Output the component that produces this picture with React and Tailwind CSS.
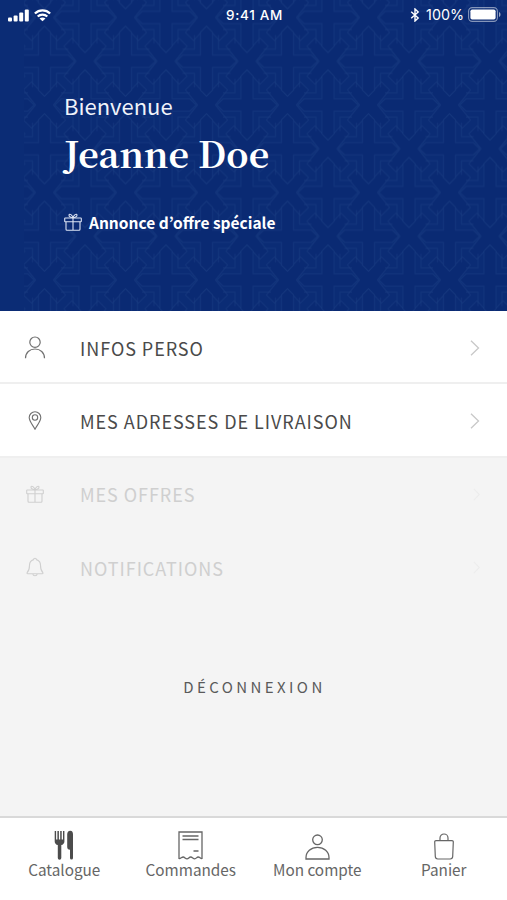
import React from "react";

const SANS = "font-['Noto_Sans_CJK_KR','Noto_Sans',sans-serif]";

function Svg({ children, className = "", ...props }) {
  return (
    <svg fill="none" stroke="currentColor" strokeWidth="1.1" className={`shrink-0 ${className}`} {...props}>
      {children}
    </svg>
  );
}

const CROSSES = [
  [0, 0],
  [81, 0],
  [0, 87.5],
  [81, 87.5],
  [40.5, 43.75],
];

const KNOTS = [
  [40.5, 0],
  [0, 43.75],
  [81, 43.75],
  [40.5, 87.5],
];

function Knot({ x, y }) {
  return (
    <path
      transform={`translate(${x} ${y})`}
      fill="#0a2a73"
      d="M0-9L13-23L21-15L9 0L21 15L13 23L0 9L-13 23L-21 15L-9 0L-21-15L-13-23Z"
    />
  );
}

function Cross({ x, y }) {
  return (
    <g transform={`translate(${x} ${y})`}>
      <path d="M-24-12H-12V-26M24-12H12V-26M-24 12H-12V26M24 12H12V26" />
      <path
        fill="#0a2a73"
        d="M-6-6V-29L0-35L6-29V-6H24L30 0L24 6H6V29L0 35L-6 29V6H-24L-30 0L-24-6Z"
      />
    </g>
  );
}

function HeaderPattern() {
  return (
    <svg className="absolute inset-0 h-full w-full" aria-hidden="true">
      <defs>
        <pattern id="crosses" width="81" height="87.5" patternUnits="userSpaceOnUse" x="4" y="17.5">
          <g fill="none" stroke="#1b3d82" strokeWidth="1.2" strokeOpacity="0.42" strokeLinejoin="round">
            {KNOTS.map(([x, y]) => (
              <Knot key={`${x}-${y}`} x={x} y={y} />
            ))}
            {CROSSES.map(([x, y]) => (
              <Cross key={`${x}-${y}`} x={x} y={y} />
            ))}
          </g>
        </pattern>
      </defs>
      <rect x="24" width="483" height="311" fill="url(#crosses)" />
    </svg>
  );
}

function StatusBar() {
  return (
    <div className="relative flex h-[30px] items-center justify-between pl-2 pr-[6px] font-['Inter',sans-serif] text-[13.5px] leading-none text-white">
      <div className="flex w-[180px] items-center gap-[5px]">
        <svg width="21" height="13" fill="currentColor" className="shrink-0">
          <rect x="0" y="8.5" width="4" height="4" rx="1" />
          <rect x="5.6" y="6.5" width="4" height="6" rx="1" />
          <rect x="11.2" y="3.5" width="4" height="9" rx="1" />
          <rect x="16.8" y="0.5" width="4" height="12" rx="1" />
        </svg>
        <svg width="17" height="13" viewBox="0 0 17 13" fill="none" stroke="currentColor" strokeWidth="2.3" className="shrink-0">
          <path d="M.9 4.5C5.2.3 11.8.3 16.1 4.5M3.7 7.5c2.7-2.5 6.9-2.5 9.6 0" />
          <path d="M8.5 12.3L5.5 9.600c1.700-1.500 4.300-1.500 6 0z" fill="currentColor" stroke="none" />
        </svg>
      </div>
      <span className="whitespace-nowrap pt-px font-medium tracking-[0.7px]">9:41 AM</span>
      <div className="flex w-[180px] items-center justify-end">
        <svg width="10" height="14" viewBox="0 0 10 14" fill="none" stroke="currentColor" strokeWidth="1.4" className="mr-[6px]">
          <path d="M1.2 3.8l7 6.2L5 13V1l3.200 3-7 6.200" />
        </svg>
        <span className="mr-[4px] pt-px text-[14.3px]">100%</span>
        <svg width="33" height="15" viewBox="0 0 33 15">
          <rect x=".6" y=".6" width="28.8" height="13.8" rx="3.6" fill="none" stroke="#fff" strokeOpacity=".5" strokeWidth="1.1" />
          <rect x="2.4" y="2.4" width="25.2" height="10.2" rx="1.8" fill="#fff" />
          <path d="M31 5v5c2-.8 2-4.200 0-5z" fill="#fff" fillOpacity=".6" />
        </svg>
      </div>
    </div>
  );
}

function GiftIcon({ className }) {
  return (
    <Svg width="18" height="18" viewBox="0 0 18 18" className={className}>
      <rect x=".7" y="5" width="16.6" height="3.8" rx=".6" />
      <path d="M2 8.800V16.200a1 1 0 001 1h12a1 1 0 001-1V8.800M9 5v12.200" />
      <path d="M9 4.800C7.500 4.700 4.500 3.900 5 1.900 5.600.1 8.300 2 9 4.800C9.700 2 12.400.1 13 1.900c.5 2-2.500 2.800-4 2.900z" />
    </Svg>
  );
}

function PersonIcon() {
  return (
    <Svg width="22" height="23" viewBox="0 0 22 23" strokeWidth="1.2">
      <circle cx="11" cy="6.2" r="5.2" />
      <path d="M1.500 22.300C1.500 16.500 5.700 13 11 13s9.500 3.500 9.500 9.300" />
    </Svg>
  );
}

function PinIcon() {
  return (
    <Svg width="14" height="19" viewBox="0 0 14 19">
      <path d="M7 18.200C5.200 14.500 1.200 10.500 1.200 6.600a5.800 5.800 0 0111.600 0C12.800 10.500 8.800 14.500 7 18.200z" />
      <circle cx="7" cy="6.5" r="2.7" />
    </Svg>
  );
}

function BellIcon() {
  return (
    <Svg width="18" height="20" viewBox="0 0 18 20">
      <path d="M7.600 2.600a1.400 1.400 0 012.800 0C13 3.400 14.500 5.600 14.500 8.300c0 3.700.7 5.600 2.300 7.200.5.600.2 1.300-.6 1.300H1.800c-.8 0-1.100-.7-.6-1.300 1.600-1.600 2.300-3.500 2.300-7.200 0-2.700 1.500-4.900 4.100-5.700zM6.800 17c.3 2.300 4.100 2.300 4.400 0" />
    </Svg>
  );
}

function MenuRow({ icon, label, disabled }) {
  return (
    <div
      className={`flex h-[73.4px] items-center pr-[27px] ${disabled ? "text-[#cfcfcf]" : "border-b-2 border-[#efefef] bg-white pt-[2px] text-[#4a4a4a]"}`}
    >
      <div className={`flex w-[70px] justify-center pb-px ${disabled ? "" : "text-[#707070]"}`}>{icon}</div>
      <span className="ml-[10px] flex-1 whitespace-nowrap text-[18px] leading-6 tracking-[0.95px]">{label}</span>
      {disabled ? (
        <Svg width="7" height="13" viewBox="0 0 7 13" className="text-[#ececec]">
          <path d="M.8.8l5.500 5.700L.8 12.200" />
        </Svg>
      ) : (
        <Svg width="10" height="16" viewBox="0 0 10 16" className="text-[#c8c8c8]" strokeWidth="1.3">
          <path d="M1 .8l7.500 7.200L1 15.200" />
        </Svg>
      )}
    </div>
  );
}

function CutleryIcon() {
  return (
    <svg width="20" height="30" viewBox="0 0 20 30" fill="#4c4c4c">
      <path d="M.7 1h1.400v8.500h1.300V1h1.500v8.500h1.300V1h1.500v8.500H9V1h1.400v10.500c0 1.900-1.300 3.200-3.100 3.600V28a1.700 1.700 0 01-3.500 0V15.100C2 14.700.7 13.400.7 11.500z" />
      <path d="M13.200 4.500C13.200 2.200 14.300.8 16.300.8S19 2.200 19 4.500V28a1.500 1.500 0 01-3 0v-8.200c-2-.2-2.800-1.300-2.800-2.800z" />
    </svg>
  );
}

function ReceiptIcon() {
  return (
    <Svg width="25" height="29" viewBox="0 0 25 29" strokeWidth="1.3">
      <path d="M1 27.500V1h23v26.500c-1.400.5-2.200-1.500-3.800-1.500s-1.800 1.800-3.500 1.800-2.200-1.800-4-1.800-2 1.800-3.700 1.800S6.800 26 5.200 26 2.500 28 1 27.500z" />
      <path d="M4.500 5h16M4.500 8.500h16M15.500 20h5" />
    </Svg>
  );
}

function AccountIcon() {
  return (
    <Svg width="25" height="26" viewBox="0 0 25 26" strokeWidth="1.3">
      <circle cx="12.5" cy="5.8" r="4.8" />
      <path d="M1 25v-1.500C1 17.500 6 13.300 12.500 13.300S24 17.500 24 23.500V25z" />
    </Svg>
  );
}

function BagIcon() {
  return (
    <Svg width="20" height="27" viewBox="0 0 20 27" strokeWidth="1.2">
      <path d="M2 7.600h16a1.300 1.300 0 011.300 1.400l-.6 14.600a2.500 2.500 0 01-2.500 2.400H3.800a2.500 2.500 0 01-2.500-2.400L.7 9A1.300 1.300 0 012 7.600zM6 7.500V5a4 4 0 018 0v2.500" />
    </Svg>
  );
}

function Tab({ icon, label }) {
  return (
    <div className="w-[127px] flex flex-col items-center text-[#666]">
      <div className="flex h-[30px] items-end">{icon}</div>
      <span className="-mt-[2px] whitespace-nowrap text-[15.3px] leading-[22px]">{label}</span>
    </div>
  );
}

export default function App() {
  return (
    <div className={`flex h-[900px] w-[507px] flex-col overflow-hidden bg-[#f4f4f4] ${SANS}`}>
      <header className="relative h-[311px] shrink-0 bg-[#0b2c75]">
        <HeaderPattern />
        <StatusBar />
        <div className="relative flex flex-col items-start pl-16 pt-[60px] text-white">
          <p className="text-[22px] leading-[30px] text-[#f0f3fa]">Bienvenue</p>
          <h1 className="mt-2 whitespace-nowrap font-['Noto_Serif_CJK_SC','Source_Serif_Pro','Liberation_Serif',serif] text-[35.8px] font-bold leading-[50px]">
            Jeanne Doe
          </h1>
          <div className="mt-[33px] flex items-center gap-[7px]">
            <GiftIcon className="mb-px text-[#dce3f3]" />
            <span className="whitespace-nowrap text-[15.5px] font-bold leading-[22px]">Annonce d’offre spéciale</span>
          </div>
        </div>
      </header>
      <nav className="shrink-0">
        <MenuRow icon={<PersonIcon />} label="INFOS PERSO" />
        <MenuRow icon={<PinIcon />} label="MES ADRESSES DE LIVRAISON" />
        <MenuRow icon={<GiftIcon />} label="MES OFFRES" disabled />
        <MenuRow icon={<BellIcon />} label="NOTIFICATIONS" disabled />
      </nav>
      <div className="flex flex-1 justify-center pt-[70px]">
        <button className="h-6 whitespace-nowrap pl-[2px] text-[15px] leading-6 tracking-[3.4px] text-[#5a5a5a]">DÉCONNEXION</button>
      </div>
      <footer className="flex h-[84px] shrink-0 border-t-2 border-[#d9d9d9] bg-white pt-[12px] pl-px">
        <Tab icon={<CutleryIcon />} label="Catalogue" />
        <Tab icon={<ReceiptIcon />} label="Commandes" />
        <Tab icon={<AccountIcon />} label="Mon compte" />
        <Tab icon={<BagIcon />} label="Panier" />
      </footer>
    </div>
  );
}
